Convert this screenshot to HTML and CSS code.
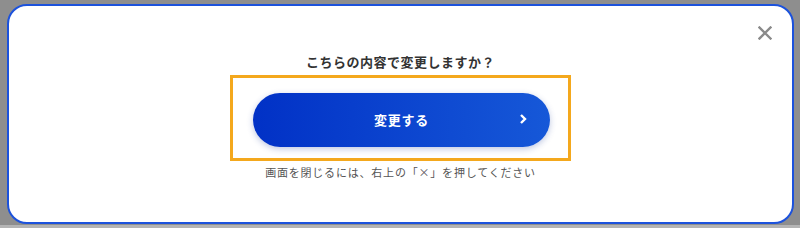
FILE: index.html
```html
<!DOCTYPE html>
<html lang="ja">
<head>
  <meta charset="utf-8">
  <title>変更確認</title>
  <link rel="stylesheet" href="styles.css">
</head>
<body>
  <div class="modal">
    <button class="close" aria-label="閉じる">
      <svg width="14" height="14" viewBox="0 0 14 14">
        <path d="M1.5 1.5 L12.5 12.5 M12.5 1.5 L1.5 12.5" stroke="#8a8a8a" stroke-width="2.4" stroke-linecap="square" fill="none"/>
      </svg>
    </button>
    <p class="title">こちらの内容で変更しますか？</p>
    <div class="focus-box">
      <button class="btn-submit">
        <span>変更する</span>
        <svg class="chevron" width="8" height="12" viewBox="0 0 8 12">
          <path d="M2 2 L6 6 L2 10" stroke="#ffffff" stroke-width="2.4" fill="none"/>
        </svg>
      </button>
    </div>
    <p class="note">画面を閉じるには、右上の「×」を押してください</p>
  </div>
</body>
</html>
```

FILE: styles.css
```css
html, body {
  margin: 0;
  height: 100%;
}

body {
  background: linear-gradient(#8e8e8e 0, #8e8e8e 225px, #b4b4b4 225px);
  padding: 4px 6px 0 7px;
  box-sizing: border-box;
  font-family: "Noto Sans CJK JP", "Noto Sans", sans-serif;
}

.modal {
  position: relative;
  height: 220px;
  box-sizing: border-box;
  background-color: #ffffff;
  border: 2px solid #1c52dc;
  border-radius: 20px;
  padding-top: 46px;
  display: flex;
  flex-direction: column;
  align-items: center;
}

.close {
  position: absolute;
  top: 20px;
  right: 20px;
  padding: 0;
  border: none;
  background: none;
  line-height: 0;
  cursor: pointer;
}

.title {
  margin: 0;
  font-size: 13px;
  line-height: 20px;
  font-weight: bold;
  letter-spacing: 0.5px;
  color: #333333;
}

.focus-box {
  margin-top: 3px;
  width: 341px;
  box-sizing: border-box;
  border: 3px solid #f4a81d;
  padding: 15px 19px 11px 20px;
}

.btn-submit {
  position: relative;
  width: 297px;
  height: 54px;
  border: none;
  border-radius: 27px;
  background: linear-gradient(90deg, #0131c6, #1658d8);
  box-shadow: 0 2px 6px rgba(40, 70, 160, 0.3);
  color: #ffffff;
  font-family: inherit;
  font-size: 13px;
  font-weight: bold;
  letter-spacing: 0.8px;
  padding-bottom: 2px;
  cursor: pointer;
}

.chevron {
  position: absolute;
  right: 23px;
  top: 20px;
}

.note {
  margin: 3px 0 0;
  font-size: 11px;
  line-height: 16px;
  letter-spacing: 0.8px;
  color: #555555;
}
```
